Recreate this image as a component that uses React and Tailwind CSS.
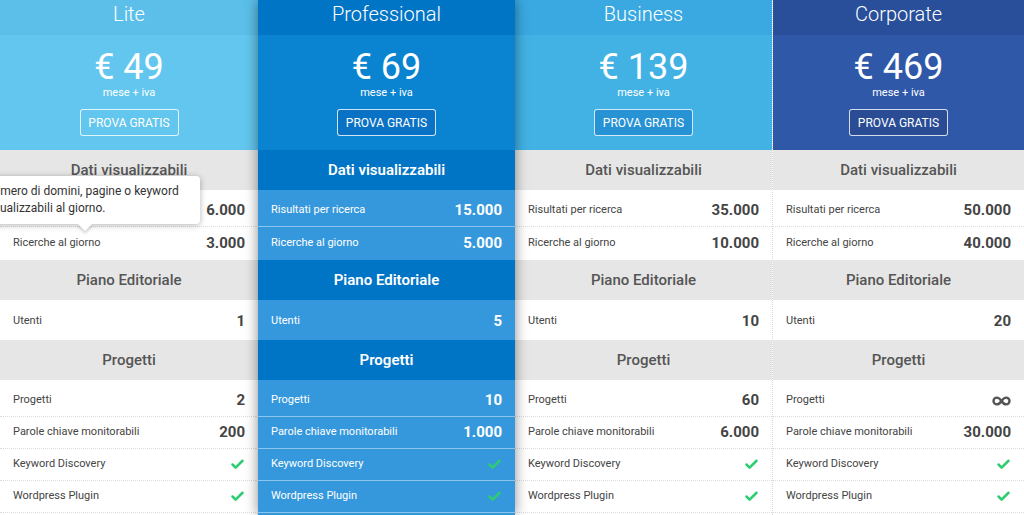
import React from 'react';
import { Check } from 'lucide-react';

const plans = [
    {
        name: 'Lite', price: '49', width: 'w-[258px]',
        titleBg: 'bg-[#5bbfe9]', priceBg: 'bg-[#63c6ee]', btnBg: 'bg-[#63c6ee]',
        values: ['6.000', '3.000', '1', '2', '200'],
    },
    {
        name: 'Professional', price: '69', width: 'w-[257px]', featured: true,
        titleBg: 'bg-[#0074c5]', priceBg: 'bg-[#0a83d0]', btnBg: 'bg-[#0a72c4]',
        values: ['15.000', '5.000', '5', '10', '1.000'],
    },
    {
        name: 'Business', price: '139', width: 'w-[257px]',
        titleBg: 'bg-[#3aa9e1]', priceBg: 'bg-[#42b2e5]', btnBg: 'bg-[#2792d4]',
        values: ['35.000', '10.000', '10', '60', '6.000'],
    },
    {
        name: 'Corporate', price: '469', width: 'flex-1',
        titleBg: 'bg-[#294e9a]', priceBg: 'bg-[#2f58a8]', btnBg: 'bg-[#294c95]',
        values: ['50.000', '40.000', '20', 'inf', '30.000'],
    },
];

const InfinityIcon = () => (
    <svg width="19" height="10" viewBox="0 0 19 10" fill="none" stroke="#555" strokeWidth="2.4">
        <path d="M9.5 5c-1.6-2.4-2.9-3.4-4.6-3.4a3.4 3.4 0 0 0 0 6.8c1.7 0 3-1 4.6-3.4s2.9-3.4 4.6-3.4a3.4 3.4 0 0 1 0 6.8c-1.7 0-3-1-4.6-3.4z" />
    </svg>
);

const SectionHead = ({ featured, children }) => (
    <div className={`h-10 flex items-center justify-center text-[15px] ${featured ? 'bg-[#0074c5] text-white font-semibold' : 'bg-[#e6e6e6] text-[#555] font-medium'}`}>
        {children}
    </div>
);

const Row = ({ featured, label, value, last }) => (
    <div className={`h-8 flex items-center justify-between px-[13px] ${last ? '' : featured ? 'border-b border-[#8cc4ec]' : 'border-b border-dotted border-[#dcdcdc]'}`}>
        <span className={`text-[11px] ${featured ? 'text-white' : 'text-[#444]'}`}>{label}</span>
        {value === 'check' ? (
            <Check size={15} strokeWidth={4} className="text-[#2ecc71]" />
        ) : value === 'inf' ? (
            <InfinityIcon />
        ) : (
            <span className={`text-[15px] font-bold ${featured ? 'text-white' : 'text-[#444]'}`}>{value}</span>
        )}
    </div>
);

const Body = ({ featured, className = '', children }) => (
    <div className={`${className} ${featured ? 'bg-[#3598dc]' : 'bg-white'}`}>{children}</div>
);

const PlanColumn = ({ plan, index }) => {
    const f = plan.featured;
    const v = plan.values;
    return (
        <div className={`${plan.width} shrink-0 flex flex-col ${f ? 'relative z-10 shadow-[0_0_12px_rgba(0,0,0,0.45)]' : ''} ${index === 3 ? 'border-l border-dotted border-[#d8d8d8]' : ''}`}>
            <div className={`h-[35px] flex items-center justify-center pb-[7px] text-white text-[20px] font-light ${plan.titleBg}`}>
                {plan.name}
            </div>
            <div className={`h-[115px] flex flex-col items-center pt-[13px] text-white ${plan.priceBg}`}>
                <div className="text-[36px] leading-[38px]">€ {plan.price}</div>
                <div className="text-[11px] leading-[12px] mt-[1px]">mese + iva</div>
                <button className={`mt-[10px] h-[27px] w-[99px] border border-white/80 rounded-[3px] text-[12px] text-white ${plan.btnBg}`}>
                    PROVA GRATIS
                </button>
            </div>
            <SectionHead featured={f}>Dati visualizzabili</SectionHead>
            <Body featured={f} className="pt-[5px] pb-[1px]">
                <Row featured={f} label="Risultati per ricerca" value={v[0]} />
                <Row featured={f} label="Ricerche al giorno" value={v[1]} last />
            </Body>
            <SectionHead featured={f}>Piano Editoriale</SectionHead>
            <Body featured={f} className="pt-[5px] pb-[3px]">
                <Row featured={f} label="Utenti" value={v[2]} last />
            </Body>
            <SectionHead featured={f}>Progetti</SectionHead>
            <Body featured={f} className="pt-[5px] h-[135px]">
                <Row featured={f} label="Progetti" value={v[3]} />
                <Row featured={f} label="Parole chiave monitorabili" value={v[4]} />
                <Row featured={f} label="Keyword Discovery" value="check" />
                <Row featured={f} label="Wordpress Plugin" value="check" />
            </Body>
        </div>
    );
};

export default function App() {
    return (
        <div className="relative w-[1024px] h-[515px] overflow-hidden bg-white" style={{ fontFamily: 'Roboto, "Liberation Sans", sans-serif' }}>
            <div className="flex">
                {plans.map((plan, i) => (
                    <PlanColumn key={plan.name} plan={plan} index={i} />
                ))}
            </div>

            {/* tooltip over the Lite column */}
            <div className="absolute left-[-27px] top-[176px] z-20 w-[227px] h-[48px] bg-white rounded-[4px] shadow-[0_1px_6px_rgba(0,0,0,0.3)] px-3 pt-[7px] text-[12px] leading-[17px] text-[#333]">
                Numero di domini, pagine o keyword
                <br />
                visualizzabili al giorno.
                <div className="absolute left-[107px] bottom-[-5px] w-[10px] h-[10px] bg-white rotate-45 shadow-[2px_2px_3px_rgba(0,0,0,0.15)]" />
            </div>
        </div>
    );
}
